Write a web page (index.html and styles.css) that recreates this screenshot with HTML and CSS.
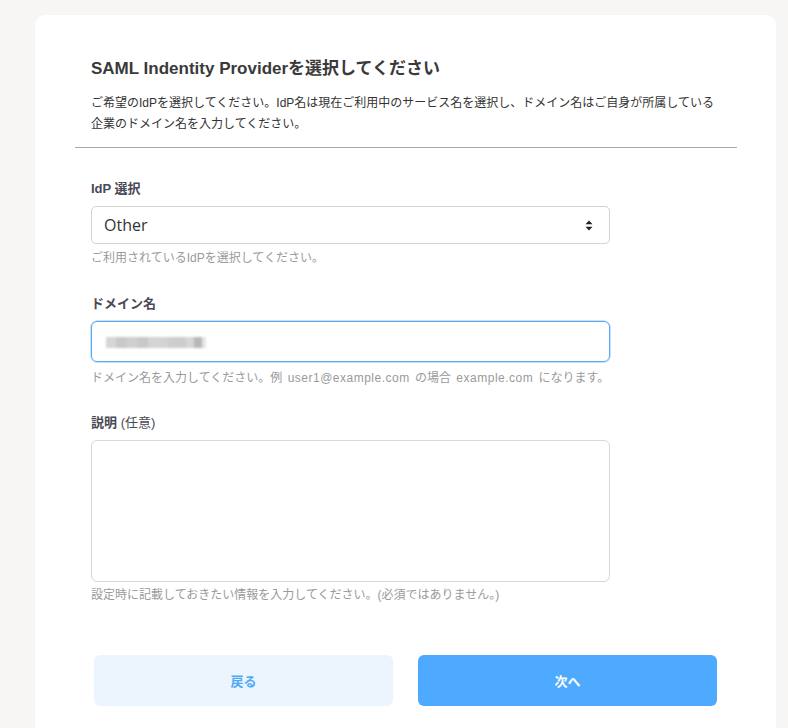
FILE: index.html
```html
<!DOCTYPE html>
<html lang="ja">
<head>
<meta charset="utf-8">
<link rel="stylesheet" href="styles.css">
</head>
<body>
<main class="card">
  <header class="head">
    <h1 class="title">SAML Indentity Providerを選択してください</h1>
    <p class="desc">ご希望のIdPを選択してください。IdP名は現在ご利用中のサービス名を選択し、ドメイン名はご自身が所属している<br>企業のドメイン名を入力してください。</p>
  </header>
  <hr class="rule">
  <form class="form">
    <div class="field f1">
      <label class="label">IdP 選択</label>
      <div class="select">
        <span class="select-val">Other</span>
        <svg class="arrows" width="8" height="11" viewBox="0 0 8 11"><path d="M4 0.5 L7.5 4.2 H0.5 Z M4 10.5 L7.5 6.8 H0.5 Z" fill="#222"/></svg>
      </div>
      <p class="hint">ご利用されているIdPを選択してください。</p>
    </div>
    <div class="field f2">
      <label class="label">ドメイン名</label>
      <div class="input focus">
        <span class="blurred"></span>
      </div>
      <p class="hint nowrap">ドメイン名を入力してください。例 <span class="latin">user1@example.com</span> の場合 <span class="latin">example.com</span> になります。</p>
    </div>
    <div class="field f3">
      <label class="label">説明 <span class="opt">(任意)</span></label>
      <div class="textarea"></div>
      <p class="hint">設定時に記載しておきたい情報を入力してください。(必須ではありません。)</p>
    </div>
  </form>
  <div class="actions">
    <button class="btn back" type="button">戻る</button>
    <button class="btn next" type="button">次へ</button>
  </div>
</main>
</body>
</html>
```

FILE: styles.css
```css
html, body {
  margin: 0;
  padding: 0;
}
body {
  background: #f7f6f4;
  font-family: "Liberation Sans", "Noto Sans CJK JP", sans-serif;
  color: #333;
  padding: 15px 12px 0 35px;
  height: 728px;
  box-sizing: border-box;
  overflow: hidden;
}
.card {
  background: #fff;
  border-radius: 10px;
  width: 741px;
  height: 760px;
  box-sizing: border-box;
  padding: 42px 39px 0 40px;
}
.head {
  padding: 0 16px;
}
.title {
  margin: 0;
  font-size: 17px;
  line-height: 24px;
  font-weight: 700;
  color: #3a3a3a;
}
.desc {
  margin: 12px 0 0;
  font-size: 12px;
  line-height: 21px;
  color: #333;
}
.rule {
  margin: 12px 0 0;
  border: 0;
  border-top: 1px solid #a9a9a9;
  height: 0;
}
.form {
  padding: 31px 0 0 16px;
  width: 519px;
}
.field {
  display: flex;
  flex-direction: column;
}
.label {
  font-size: 13px;
  line-height: 20px;
  font-weight: 700;
  color: #4a4a55;
  margin-bottom: 7px;
}
.opt {
  font-weight: 400;
}
.select {
  height: 38px;
  box-sizing: border-box;
  border: 1px solid #d3d3d3;
  border-radius: 5px;
  display: flex;
  align-items: center;
  justify-content: space-between;
  padding: 0 16px 0 12px;
}
.select-val {
  font-family: "Open Sans", "Noto Sans CJK JP", sans-serif;
  font-size: 16px;
  color: #333;
}
.hint {
  margin: 5px 0 0;
  font-family: "Liberation Sans", "Noto Sans CJK JP", sans-serif;
  font-size: 12px;
  line-height: 18px;
  color: #9a9a9a;
}
.nowrap {
  white-space: nowrap;
}
.latin {
  letter-spacing: 0.5px;
  padding: 0 2px;
}
.f1 { margin-bottom: 27px; }
.f2 { margin-bottom: 26px; }
.f2 .hint { margin-top: 7px; }
.input {
  height: 41px;
  box-sizing: border-box;
  border: 1px solid #d3d3d3;
  border-radius: 6px;
  display: flex;
  align-items: center;
  padding: 0 14px;
}
.input.focus {
  border-color: #5aa9f4;
  box-shadow: 0 0 0 0.5px #8cc3f7;
}
.blurred {
  display: block;
  width: 100px;
  height: 11px;
  margin-top: 1px;
  background: linear-gradient(90deg, #d6d6d6 0 10px, #c9c9c9 10px 20px, #cfcfcf 20px 32px, #c8c8c8 32px 42px, #d4d4d4 42px 62px, #cdcdcd 62px 80px, #d6d6d6 80px 88px, #b8b8b8 88px 96px, #e6e6e6 96px 100px);
  filter: blur(0.8px);
}
.textarea {
  height: 142px;
  box-sizing: border-box;
  border: 1px solid #d8d8d8;
  border-radius: 6px;
}
.f3 .hint { margin-top: 4px; }
.actions {
  display: flex;
  gap: 25px;
  padding: 51px 0 0 19px;
}
.btn {
  width: 299px;
  height: 51px;
  border: 0;
  border-radius: 6px;
  font-family: "Liberation Sans", "Noto Sans CJK JP", sans-serif;
  font-size: 13px;
  font-weight: 700;
}
.back {
  background: #ecf4fe;
  color: #4eaaf7;
}
.next {
  background: #4eaafe;
  color: #fff;
}
```
